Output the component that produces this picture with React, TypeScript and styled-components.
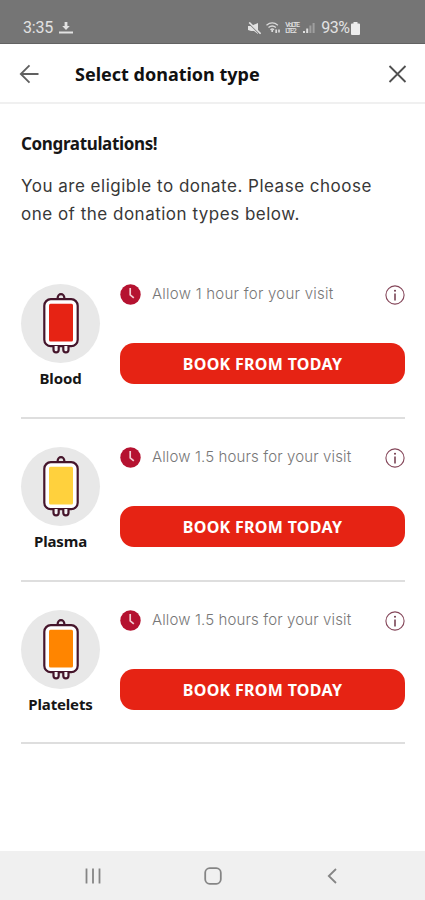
import React from "react";
import styled, { createGlobalStyle } from "styled-components";

const GlobalStyle = createGlobalStyle`
  * { box-sizing: border-box; }
  body { margin: 0; background: #fff; }
  button { font: inherit; border: 0; padding: 0; background: none; cursor: pointer; }
  svg { display: block; flex: none; }
`;

const display = `"Noto Sans", sans-serif`;
const copy = `Inter, "Open Sans", sans-serif`;

const Screen = styled.div`
  width: 425px;
  height: 900px;
  display: flex;
  flex-direction: column;
  background: #fff;
  overflow: hidden;
`;

const StatusBar = styled.div`
  height: 44px;
  flex: none;
  display: flex;
  align-items: center;
  justify-content: space-between;
  padding: 13px 65px 0 23px;
  background: #757575;
  border-bottom: 1px solid #626262;
  color: #e2e2e2;
  font: 400 16px/20px Roboto, sans-serif;
`;

const StatusGroup = styled.div<{ $gap: number }>`
  display: flex;
  align-items: center;
  gap: ${(p) => p.$gap}px;
`;

const Clock = styled.span`
  letter-spacing: -0.2px;
`;

const NetworkLabel = styled.span`
  display: flex;
  flex-direction: column;
  font: 500 7px/6.5px Roboto, sans-serif;
  letter-spacing: -1.2px;
  width: 13px;
`;

const Charge = styled.span`
  letter-spacing: -0.5px;
  margin-left: 2px;
`;

const Header = styled.header`
  height: 60px;
  flex: none;
  display: flex;
  align-items: center;
  padding: 1px 18px 0 19px;
  border-bottom: 2px solid #f0f0f0;
`;

const Title = styled.h1`
  margin: 0 auto 0 36px;
  font: 700 18px/24px ${display};
  color: #111;
  white-space: nowrap;
`;

const Content = styled.main`
  flex: 1;
  padding: 28px 20px 0 21px;
`;

const Greeting = styled.h2`
  margin: 0;
  font: 700 17px/24px ${display};
  letter-spacing: -0.35px;
  color: #161616;
`;

const Message = styled.p`
  margin: 16px 0 28px;
  font: 400 17px/28px ${copy};
  letter-spacing: 0.5px;
  color: #383838;
  white-space: pre-line;
`;

const DonationRow = styled.section<{ $height: number }>`
  height: ${(p) => p.$height}px;
  display: flex;
  gap: 20px;
  padding-top: 28px;
  border-bottom: 2px solid #dedede;
`;

const Kind = styled.div`
  width: 79px;
  display: flex;
  flex-direction: column;
  align-items: center;
`;

const Disc = styled.div`
  width: 79px;
  height: 79px;
  border-radius: 50%;
  background: #e8e8e8;
  display: flex;
  align-items: center;
  justify-content: center;
`;

const KindName = styled.span`
  margin-top: 4px;
  font: 700 15px/22px ${display};
  letter-spacing: -0.15px;
  color: #161616;
`;

const Details = styled.div`
  flex: 1;
  display: flex;
  flex-direction: column;
`;

const Visit = styled.div`
  height: 21px;
  display: flex;
  align-items: center;
`;

const Duration = styled.span<{ $spacing: number }>`
  margin: -2px auto 0 11px;
  font: 300 15px/20px ${copy};
  letter-spacing: ${(p) => p.$spacing}px;
  color: #777;
  white-space: nowrap;
`;

const BookButton = styled.button`
  height: 41px;
  margin-top: 38px;
  border-radius: 14px;
  background: #e62314;
  color: #fff;
  font: 700 16px/42px ${display};
  letter-spacing: 0.3px;
`;

const NavBar = styled.nav`
  height: 49px;
  flex: none;
  display: flex;
  align-items: center;
  justify-content: space-between;
  padding: 1px 85px 0 85px;
  background: #f0f0f0;
`;

const NavButton = styled.button`
  width: 16px;
  display: flex;
  justify-content: center;
`;

const DownloadIcon = () => (
  <svg width="14" height="14" viewBox="0 0 14 14" fill="#e2e2e2">
    <path d="M5.6 1h2.8v4h2.4L7 9 3.2 5h2.4zM0 10.4h14v2.2H0z" />
  </svg>
);

const MutedIcon = () => (
  <svg width="13" height="13" viewBox="0 0 13 13" fill="#e2e2e2">
    <path d="M0 4h3l7-3v11L6 9H3L0 8z" />
    <path d="M1 1l11 11" stroke="#757575" strokeWidth="1.8" />
    <path d="M1.2.4l11.4 11.400" stroke="#e2e2e2" strokeWidth="1.600" />
  </svg>
);

const WifiIcon = () => (
  <svg width="15" height="12" viewBox="0 0 15 12" fill="none" stroke="#dadada" strokeWidth="1.3">
    <path d="M.5 3.2q5.7-4.500 11.400 0M2.500 5.500q3.700-3 7.400 0M4.400 7.700q1.900-1.400 3.600 0" />
    <path d="M6.200 8v2M10.200 7.500v3.500M13 7.500v3" strokeWidth="1.700" />
  </svg>
);

const SignalIcon = () => (
  <svg width="12" height="12" viewBox="0 0 12 12" fill="#dedede">
    <path d="M0 9h2v2H0zM3.200 6.500h2V11h-2z" />
    <path d="M6.400 3.500h2V11h-2zM9.600 1h2v10h-2z" opacity=".4" />
  </svg>
);

const BatteryIcon = () => (
  <svg width="9" height="13" viewBox="0 0 9 13" fill="#ececec">
    <path d="M2.500 0h4v1.400H8a1 1 0 0 1 1 1V12a1 1 0 0 1-1 1H1a1 1 0 0 1-1-1V2.400a1 1 0 0 1 1-1h1.500z" />
  </svg>
);

const BackIcon = () => (
  <svg width="20" height="20" viewBox="0 0 20 20" fill="none" stroke="#606060" strokeWidth="1.800">
    <path d="M19.500 10H1.800M10.500 1.300L1.800 10l8.700 8.700" />
  </svg>
);

const CloseIcon = () => (
  <svg width="19" height="18" viewBox="0 0 19 18" fill="none" stroke="#505050" strokeWidth="1.800">
    <path d="M1.500 1l16 16M17.500 1l-16 16" />
  </svg>
);

const BagIcon = ({ fill }: { fill: string }) => (
  <svg width="38" height="62" viewBox="0 0 38 62" fill="none" stroke="#45152b" strokeWidth="2.200">
    <path d="M15.700 6V4.500a3.300 3.300 0 0 1 6.600 0V6" fill="#e8e8e8" />
    <rect x="2.300" y="6.200" width="33.400" height="47" rx="6.500" fill="#fff" />
    <path
      d="M11.500 53v3.800a2.600 2.600 0 0 0 5.200 0V53M21.300 53v3.800a2.600 2.600 0 0 0 5.200 0V53"
      fill="#f4f4f4"
    />
    <rect x="7" y="10.700" width="24" height="37.800" rx="1.500" fill={fill} stroke="none" />
  </svg>
);

const ClockIcon = () => (
  <svg width="21" height="21" viewBox="0 0 21 21">
    <circle cx="10.500" cy="10.500" r="10.200" fill="#b51230" />
    <path d="M10.200 4v6.800l3.600 3" fill="none" stroke="#f2ccd2" strokeWidth="1.700" />
  </svg>
);

const InfoIcon = () => (
  <svg width="20" height="20" viewBox="0 0 20 20">
    <circle cx="10" cy="10" r="9.100" fill="none" stroke="#85475a" strokeWidth="1.100" />
    <path d="M10 8.500v7" stroke="#70384a" strokeWidth="1.500" />
    <circle cx="10" cy="5.700" r="1" fill="#70384a" />
  </svg>
);

const RecentsIcon = () => (
  <svg width="16" height="16" viewBox="0 0 16 16" stroke="#858585" strokeWidth="1.800">
    <path d="M1.500.5v15M8 .5v15M14.500.5v15" />
  </svg>
);

const HomeIcon = () => (
  <svg width="18" height="18" viewBox="0 0 18 18" fill="none" stroke="#858585" strokeWidth="1.800">
    <rect x="1.200" y="1.200" width="15.600" height="15.600" rx="4.500" />
  </svg>
);

const ChevronIcon = () => (
  <svg width="10" height="16" viewBox="0 0 10 16" fill="none" stroke="#858585" strokeWidth="1.800">
    <path d="M9 1L1.800 8 9 15" />
  </svg>
);

const donations = [
  { name: "Blood", visit: "Allow 1 hour for your visit", fill: "#e62314", height: 163, spacing: 0.25 },
  { name: "Plasma", visit: "Allow 1.5 hours for your visit", fill: "#ffd13d", height: 163, spacing: 0.13 },
  { name: "Platelets", visit: "Allow 1.5 hours for your visit", fill: "#ff8500", height: 162, spacing: 0.13 },
];

export default function App() {
  return (
    <Screen>
      <GlobalStyle />
      <StatusBar>
        <StatusGroup $gap={6}>
          <Clock>3:35</Clock>
          <DownloadIcon />
        </StatusGroup>
        <StatusGroup $gap={4.5}>
          <MutedIcon />
          <WifiIcon />
          <NetworkLabel>
            <span>VoLTE</span>
            <span>LTE2</span>
          </NetworkLabel>
          <SignalIcon />
          <StatusGroup $gap={1.5}>
            <Charge>93%</Charge>
            <BatteryIcon />
          </StatusGroup>
        </StatusGroup>
      </StatusBar>
      <Header>
        <button aria-label="Back"><BackIcon /></button>
        <Title>Select donation type</Title>
        <button aria-label="Close"><CloseIcon /></button>
      </Header>
      <Content>
        <Greeting>Congratulations!</Greeting>
        <Message>{"You are eligible to donate. Please choose\none of the donation types below."}</Message>
        {donations.map((d) => (
          <DonationRow key={d.name} $height={d.height}>
            <Kind>
              <Disc><BagIcon fill={d.fill} /></Disc>
              <KindName>{d.name}</KindName>
            </Kind>
            <Details>
              <Visit>
                <ClockIcon />
                <Duration $spacing={d.spacing}>{d.visit}</Duration>
                <InfoIcon />
              </Visit>
              <BookButton>BOOK FROM TODAY</BookButton>
            </Details>
          </DonationRow>
        ))}
      </Content>
      <NavBar>
        <NavButton aria-label="Recent apps"><RecentsIcon /></NavButton>
        <NavButton aria-label="Home"><HomeIcon /></NavButton>
        <NavButton aria-label="Go back"><ChevronIcon /></NavButton>
      </NavBar>
    </Screen>
  );
}
